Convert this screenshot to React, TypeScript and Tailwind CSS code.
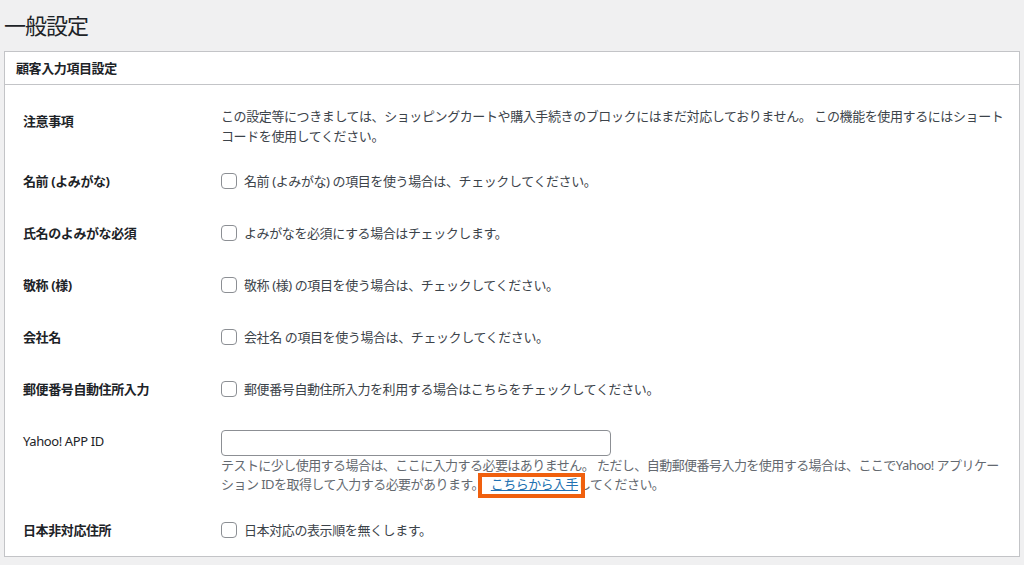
import { useState } from "react";

type CheckRow = { label: string; text: string };

const checkRows: CheckRow[] = [
  { label: "名前 (よみがな)", text: "名前 (よみがな) の項目を使う場合は、チェックしてください。" },
  { label: "氏名のよみがな必須", text: "よみがなを必須にする場合はチェックします。" },
  { label: "敬称 (様)", text: "敬称 (様) の項目を使う場合は、チェックしてください。" },
  { label: "会社名", text: "会社名 の項目を使う場合は、チェックしてください。" },
  { label: "郵便番号自動住所入力", text: "郵便番号自動住所入力を利用する場合はこちらをチェックしてください。" },
];

function Check({ text }: { text: string }) {
  const [checked, setChecked] = useState(false);
  return (
    <label className="flex items-center gap-[7px] text-[#3c434a] cursor-pointer">
      <input
        type="checkbox"
        checked={checked}
        onChange={(e) => setChecked(e.target.checked)}
        className="appearance-none w-4 h-4 shrink-0 rounded-[4px] border border-[#8c8f94] bg-white checked:bg-[#2271b1]"
      />
      <span>{text}</span>
    </label>
  );
}

export default function App() {
  const [appId, setAppId] = useState("");

  return (
    <div
      className="min-h-screen bg-[#f0f0f1] text-[13px] leading-5 tracking-[-0.4px]"
      style={{ fontFamily: '"Noto Sans", "Noto Sans CJK JP", sans-serif' }}
    >
      <h1 className="pl-1 pt-[9px] h-[51px] text-[22px] leading-8 text-[#1d2327] tracking-[-1px]">一般設定</h1>

      <div className="ml-1 mr-1 bg-white border border-[#c3c4c7]">
        <div className="h-[33px] flex items-center pl-[11px] border-b border-[#c3c4c7] font-bold text-[#1d2327]">
          顧客入力項目設定
        </div>

        <div className="pl-[18px] pr-[15px]">
          <div className="flex pt-[21px] pb-[9px]">
            <div className="w-[198px] shrink-0 pt-[5px] font-bold text-[#1d2327]">注意事項</div>
            <p className="text-[#3c434a]">
              この設定等につきましては、ショッピングカートや購入手続きのブロックにはまだ対応しておりません。 この機能を使用するにはショートコードを使用してください。
            </p>
          </div>

          {checkRows.map((row) => (
            <div key={row.label} className="flex items-center py-4">
              <div className="w-[198px] shrink-0 font-bold text-[#1d2327]">{row.label}</div>
              <Check text={row.text} />
            </div>
          ))}

          <div className="flex pt-[15px] pb-[10px]">
            <div className="w-[198px] shrink-0 pt-[1px] text-[#1d2327]">Yahoo! APP ID</div>
            <div className="flex-1">
              <input
                type="text"
                value={appId}
                onChange={(e) => setAppId(e.target.value)}
                className="block w-[390px] h-[26px] rounded-[4px] border border-[#8c8f94] bg-white px-2 outline-none"
              />
              <p className="text-[#646970] leading-[19px] tracking-[-0.55px]">
                テストに少し使用する場合は、ここに入力する必要はありません。 ただし、自動郵便番号入力を使用する場合は、ここでYahoo! アプリケーション IDを取得して入力する必要があります。{" "}
                <span className="relative ml-[4px]">
                  <a href="#" className="text-[#2271b1] underline">こちらから入手</a>
                  <span className="absolute left-[-13px] right-[-7px] top-[-2px] bottom-[-5px] border-4 border-[#f0600e] pointer-events-none" />
                </span>
                してください。
              </p>
            </div>
          </div>

          <div className="flex items-center py-4">
            <div className="w-[198px] shrink-0 font-bold text-[#1d2327]">日本非対応住所</div>
            <Check text="日本対応の表示順を無くします。" />
          </div>
        </div>
      </div>
    </div>
  );
}
